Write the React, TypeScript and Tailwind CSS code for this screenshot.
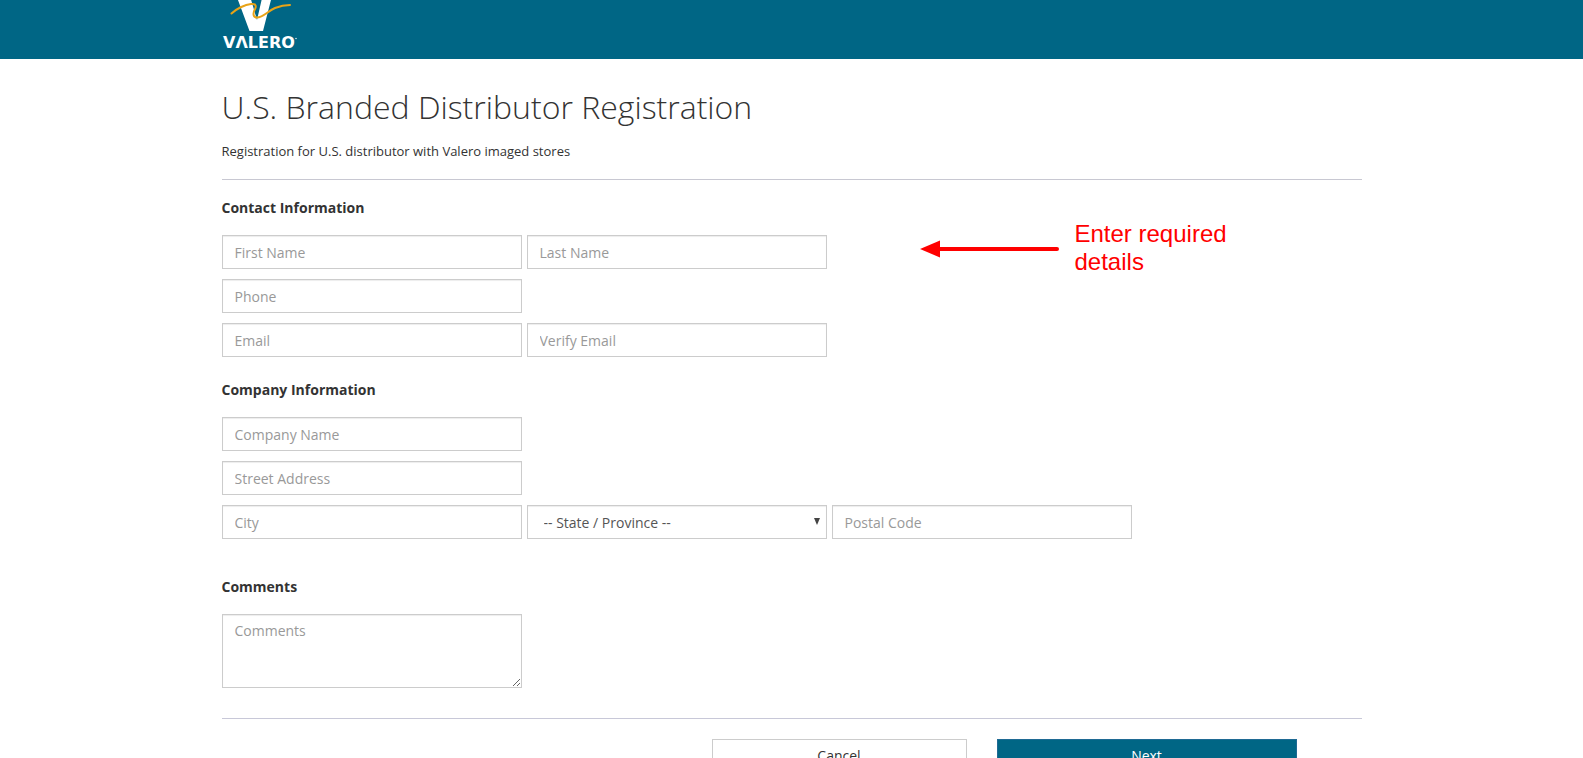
import type { ComponentProps, ReactNode } from "react"
import clsx from "clsx"

const fieldBase =
  "rounded-none border border-[#ccc] bg-white px-3 text-sm text-[#555] shadow-[inset_0_1px_1px_rgba(0,0,0,0.075)] outline-none placeholder:text-[#999] focus:border-[#006685]"

function TextField({ label, ...props }: { label: string } & ComponentProps<"input">) {
  return <input aria-label={label} placeholder={label} className={clsx(fieldBase, "h-[34px] w-[300px] py-1.5")} {...props} />
}

function Row({ children }: { children: ReactNode }) {
  return <div className="flex flex-wrap gap-[5px]">{children}</div>
}

function Section({ title, className, children }: { title: string; className?: string; children: ReactNode }) {
  return (
    <section className={className}>
      <h2 className="mb-[17px] text-sm leading-5 font-bold">{title}</h2>
      <div className="flex flex-col gap-2.5">{children}</div>
    </section>
  )
}

function Logo() {
  return (
    <svg width="80" height="59" viewBox="0 0 80 59" role="img" aria-label="Valero">
      <path d="M14.500 -4 L27.500 31 H41 L50 -4 H40.500 L35 20 L28 -4 Z" fill="#fff" />
      <path
        d="M9.500 13.500 C14 9 23 4.500 29 4 C34 3.500 34.500 6 33 9 C31 12.500 30.500 17.500 35 17.500 C41 17.500 46 11 53 8 C58 6 63 5 68 5"
        fill="none"
        stroke="#e8a317"
        strokeWidth="2"
        strokeLinecap="round"
      />
      <text x="1" y="48" fill="#fff" fontSize="16" fontWeight="700" fontFamily="DejaVu Sans, sans-serif">
        VΛLERO
      </text>
      <circle cx="74" cy="38.500" r="0.700" fill="#fff" />
    </svg>
  )
}

// Callout that floats over the form
function Callout() {
  return (
    <div className="pointer-events-none absolute top-[161px] left-[698px] flex items-start gap-4 text-[#f00]">
      <svg width="139" height="18" viewBox="0 0 139 18" className="mt-5" aria-hidden="true">
        <path d="M0 9 L20 0.500 V17.500 Z" fill="currentColor" />
        <path d="M18 9 H137" stroke="currentColor" strokeWidth="4" strokeLinecap="round" />
      </svg>
      <p className="w-[170px] font-['Liberation_Sans',Arial,sans-serif] text-2xl leading-7">Enter required details</p>
    </div>
  )
}

export default function App() {
  return (
    <div className="bg-white font-['Open_Sans',sans-serif] text-[#333]">
      <header className="h-[59px] overflow-hidden bg-[#006685]">
        <div className="mx-auto max-w-[1140px]">
          <a href="#home" className="inline-block">
            <Logo />
          </a>
        </div>
      </header>

      <main className="relative mx-auto max-w-[1140px]">
        <h1 className="pt-7 text-[32px] leading-10 font-light">U.S. Branded Distributor Registration</h1>
        <p className="mt-3.5 text-[13px] leading-5">Registration for U.S. distributor with Valero imaged stores</p>
        <hr className="mt-[18px] border-[#c8c8d2]" />

        <form onSubmit={(e) => e.preventDefault()}>
          <Section title="Contact Information" className="mt-[18px]">
            <Row>
              <TextField label="First Name" />
              <TextField label="Last Name" />
            </Row>
            <Row>
              <TextField label="Phone" type="tel" />
            </Row>
            <Row>
              <TextField label="Email" type="email" />
              <TextField label="Verify Email" type="email" />
            </Row>
          </Section>

          <Section title="Company Information" className="mt-[23px]">
            <Row>
              <TextField label="Company Name" />
            </Row>
            <Row>
              <TextField label="Street Address" />
            </Row>
            <Row>
              <TextField label="City" />
              <div className="relative">
                <select aria-label="State / Province" className={clsx(fieldBase, "h-[34px] w-[300px] appearance-none pt-0.5 pl-4")}>
                  <option>-- State / Province --</option>
                  <option>Louisiana</option>
                  <option>Oklahoma</option>
                  <option>Texas</option>
                </select>
                <svg width="6" height="7" viewBox="0 0 6 7" className="pointer-events-none absolute top-[13px] right-[7px]" aria-hidden="true">
                  <path d="M0 0 H6 L3 7 Z" fill="#444" />
                </svg>
              </div>
              <TextField label="Postal Code" />
            </Row>
          </Section>

          <Section title="Comments" className="mt-[38px]">
            <textarea aria-label="Comments" placeholder="Comments" className={clsx(fieldBase, "h-[74px] w-[300px] resize py-1.5 leading-5")} />
          </Section>

          <hr className="mt-[30px] border-[#c8c8d8]" />

          <div className="mt-5 mr-[65px] flex justify-end gap-[30px] text-sm leading-5">
            <button type="button" className="w-[255px] border border-[#ccc] bg-white py-1.5">
              Cancel
            </button>
            <button type="submit" className="w-[300px] border border-[#1f6a94] bg-[#006685] py-1.5 text-white">
              Next
            </button>
          </div>
        </form>

        <Callout />
      </main>
    </div>
  )
}
